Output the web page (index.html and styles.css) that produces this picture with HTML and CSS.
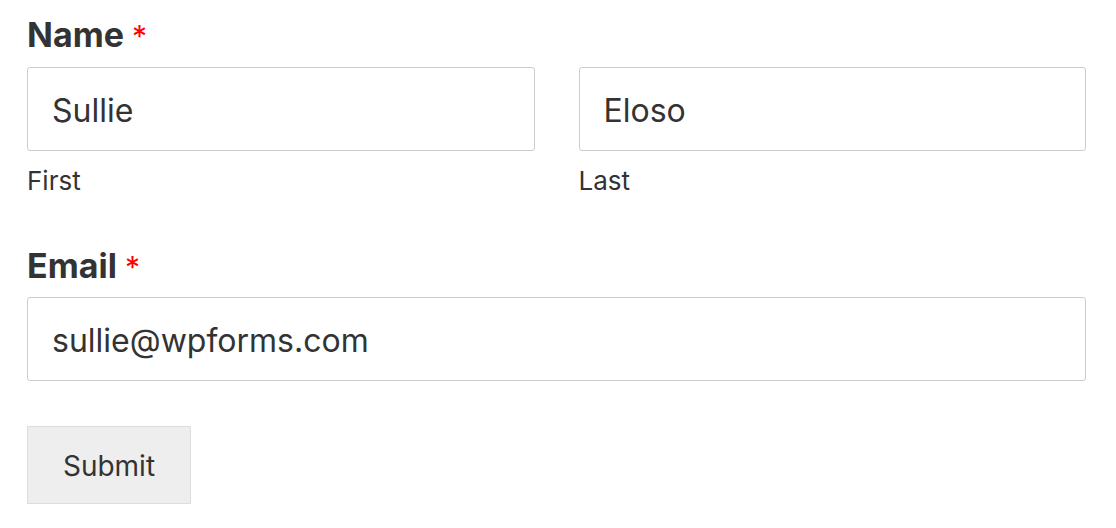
FILE: index.html
```html
<!DOCTYPE html>
<html lang="en">
<head>
<meta charset="utf-8">
<title>Form</title>
<link rel="stylesheet" href="styles.css">
</head>
<body>
<form class="form">
  <div class="field">
    <label class="field-label">Name <span class="required">*</span></label>
    <div class="row">
      <div class="col">
        <div class="input">Sullie</div>
        <div class="sublabel">First</div>
      </div>
      <div class="col">
        <div class="input">Eloso</div>
        <div class="sublabel">Last</div>
      </div>
    </div>
  </div>
  <div class="field field-email">
    <label class="field-label">Email <span class="required">*</span></label>
    <div class="input">sullie@wpforms.com</div>
  </div>
  <div class="actions">
    <button type="button" class="submit">Submit</button>
  </div>
</form>
</body>
</html>
```
FILE: styles.css
```css
html, body {
  margin: 0;
  padding: 0;
  background: #fff;
}
body {
  font-family: Inter, "Noto Sans", sans-serif;
  color: #333;
}
.form {
  padding: 0 30px 0 27px;
  display: flex;
  flex-direction: column;
}
.field {
  display: flex;
  flex-direction: column;
}
.field-label {
  display: block;
  font-weight: 700;
  font-size: 34px;
  line-height: 44px;
  padding-top: 13px;
  margin-bottom: 9px;
  color: #333;
}
.field-email .field-label {
  margin-top: 45px;
  padding-top: 0;
  margin-bottom: 8px;
}
.required {
  color: #ff0000;
  font-weight: 400;
  font-size: 30px;
}
.row {
  display: flex;
  gap: 44px;
}
.col {
  flex: 1;
  display: flex;
  flex-direction: column;
}
.input {
  box-sizing: border-box;
  height: 84px;
  border: 1px solid #ccc;
  border-radius: 3px;
  padding: 2px 24px 0;
  display: flex;
  align-items: center;
  font-size: 32px;
  color: #333;
  background: #fff;
}
.sublabel {
  font-size: 26px;
  line-height: 36px;
  margin-top: 12px;
  color: #333;
}
.actions {
  margin-top: 45px;
}
.submit {
  box-sizing: border-box;
  width: 164px;
  height: 78px;
  background: #eee;
  border: 1px solid #ddd;
  border-radius: 0;
  font-family: Inter, "Noto Sans", sans-serif;
  font-size: 28px;
  color: #333;
  padding: 2px 0 0;
}
```
